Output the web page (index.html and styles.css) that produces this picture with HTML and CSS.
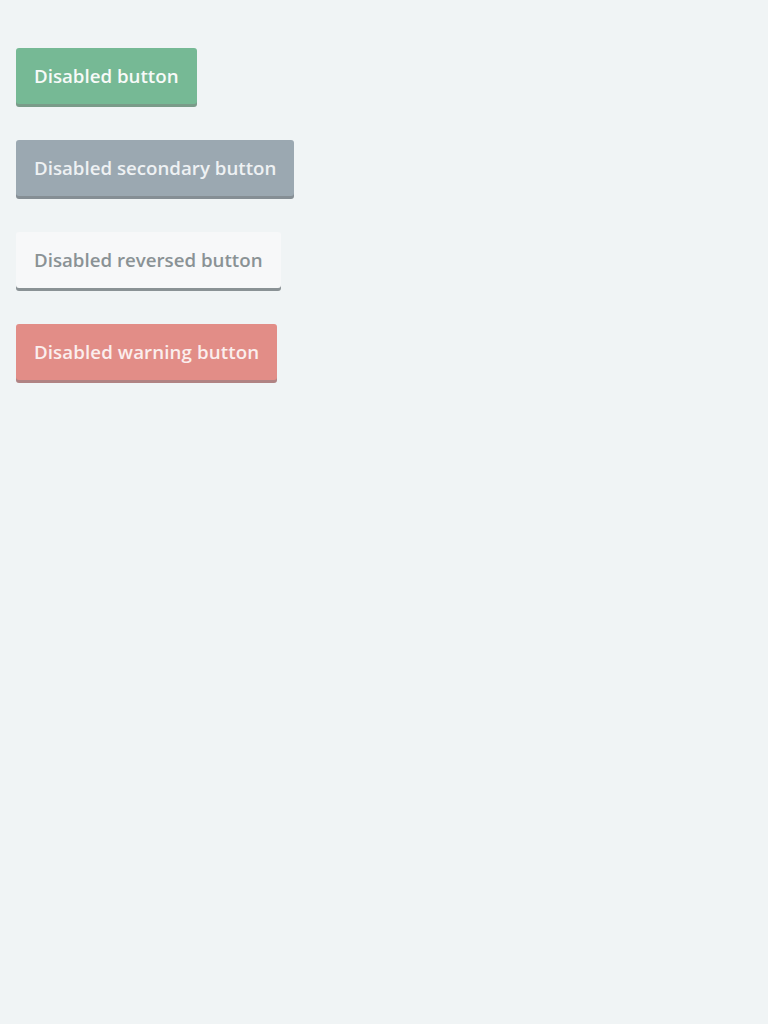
FILE: index.html
```html
<!DOCTYPE html>
<html>
<head>
<meta charset="utf-8">
<link rel="stylesheet" href="styles.css">
</head>
<body>
<div class="stack">
  <button class="btn btn-primary" disabled>Disabled button</button>
  <button class="btn btn-secondary" disabled>Disabled secondary button</button>
  <button class="btn btn-reversed" disabled>Disabled reversed button</button>
  <button class="btn btn-warning" disabled>Disabled warning button</button>
</div>
</body>
</html>
```
FILE: styles.css
```css
html, body {
  margin: 0;
  padding: 0;
  background: #f0f4f5;
  height: 100%;
}
.stack {
  display: flex;
  flex-direction: column;
  align-items: flex-start;
  gap: 36px;
  padding: 48px 16px;
}
.btn {
  font-family: "Open Sans", "Noto Sans", sans-serif;
  font-weight: 600;
  font-size: 18.7px;
  height: 56px;
  padding: 0 18px 2px;
  border: none;
  border-radius: 3px;
  cursor: default;
  letter-spacing: 0;
}
.btn-primary {
  background: #76b995;
  color: #f7faf8;
  box-shadow: 0 3px 0 #7a9b89;
}
.btn-secondary {
  background: #9ba8b1;
  color: #eef1f3;
  box-shadow: 0 3px 0 #858e94;
}
.btn-reversed {
  background: #f7f8f9;
  color: #8a9295;
  box-shadow: 0 3px 0 #8a9295;
}
.btn-warning {
  background: #e28d87;
  color: #fbeeed;
  box-shadow: 0 3px 0 #b08383;
  letter-spacing: 0.1px;
}
```
